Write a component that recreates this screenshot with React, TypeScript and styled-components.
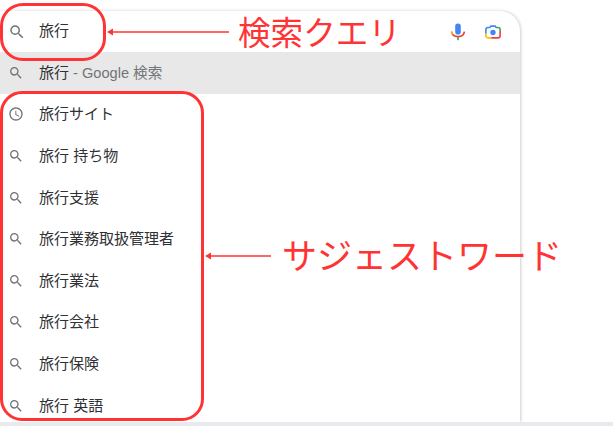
import styled, { createGlobalStyle } from "styled-components";

const GlobalStyle = createGlobalStyle`
    html, body {
        margin: 0;
        padding: 0;
        background: #fff;
        overflow: hidden;
    }
`;

const Page = styled.div`
    position: relative;
    width: 613px;
    height: 426px;
    display: flex;
    flex-direction: column;
    overflow: hidden;
    font-family: "Liberation Sans", "Noto Sans CJK JP", sans-serif;
`;

const Card = styled.div`
    flex: 1;
    min-height: 0;
    width: 520px;
    margin-top: 11px;
    background: #fff;
    border-top-right-radius: 20px;
    box-shadow: 1px 0 3px rgba(32, 33, 36, 0.22);
    overflow: hidden;
`;

const BottomStrip = styled.div`
    height: 4px;
    background: #e8eaed;
    flex-shrink: 0;
    position: relative;
`;

const SearchBar = styled.div`
    height: 41px;
    display: flex;
    align-items: center;
`;

const IconCell = styled.div`
    width: 39px;
    padding-left: 8px;
    box-sizing: border-box;
    display: flex;
    align-items: center;
    color: #70757a;
    flex-shrink: 0;
`;

const Query = styled.div`
    flex: 1;
    font-size: 15px;
    color: #303134;
    padding-bottom: 4px;
`;

const Tools = styled.div`
    display: flex;
    align-items: center;
    gap: 19px;
    padding-right: 19px;
`;

const Row = styled.div<{ $active?: boolean }>`
    height: 41.6px;
    display: flex;
    align-items: center;
    font-size: 15px;
    color: #303134;
    background: ${(props) => (props.$active ? "#e8e8e8" : "transparent")};
`;

const RowText = styled.span`
    padding-bottom: 3px;
`;

const Muted = styled.span`
    color: #70757a;
    font-size: 14.6px;
`;

const RedBox = styled.div<{ $w: number; $h: number; $x: number; $y: number; $radius: number }>`
    position: absolute;
    left: ${(props) => props.$x}px;
    top: ${(props) => props.$y}px;
    width: ${(props) => props.$w}px;
    height: ${(props) => props.$h}px;
    box-sizing: border-box;
    border: 3.5px solid #ff3333;
    border-radius: ${(props) => props.$radius}px;
`;

const Label = styled.div<{ $x: number; $y: number; $size: number }>`
    position: absolute;
    left: ${(props) => props.$x}px;
    top: ${(props) => props.$y}px;
    font-size: ${(props) => props.$size}px;
    font-weight: 400;
    line-height: 40px;
    color: #ff3333;
    white-space: nowrap;
    font-family: "Noto Sans CJK JP", sans-serif;
`;

const ArrowSvg = styled.svg<{ $x: number; $y: number }>`
    position: absolute;
    left: ${(props) => props.$x}px;
    top: ${(props) => props.$y}px;
`;

const SearchIcon = ({ size = 16 }: { size?: number }) => (
    <svg width={size} height={size} viewBox="0 0 24 24" fill="currentColor">
        <path d="M15.5 14h-.79l-.28-.27A6.47 6.47 0 0 0 16 9.5 6.5 6.5 0 1 0 9.5 16c1.61 0 3.09-.59 4.23-1.57l.27.28v.79l5 4.99L20.49 19l-4.99-5zm-6 0C7.01 14 5 11.99 5 9.5S7.01 5 9.5 5 14 7.01 14 9.5 11.99 14 9.5 14z" />
    </svg>
);

const ClockIcon = () => (
    <svg width="16" height="16" viewBox="0 0 24 24" fill="currentColor">
        <path d="M11.99 2C6.47 2 2 6.48 2 12s4.47 10 9.99 10C17.52 22 22 17.52 22 12S17.52 2 11.99 2zM12 20c-4.42 0-8-3.58-8-8s3.58-8 8-8 8 3.58 8 8-3.58 8-8 8zm.5-13H11v6l5.25 3.15.75-1.23-4.5-2.67z" />
    </svg>
);

const MicIcon = () => (
    <svg width="16" height="18" viewBox="0 0 16 18" fill="none">
        <rect x="5.2" y="0.5" width="5.6" height="11" rx="2.8" fill="#4285f4" />
        <path d="M1.6 8.6c.3 3 2.9 5 6.4 5s6.1-2 6.4-5" stroke="#ea4335" strokeWidth="1.6" />
        <path d="M1.6 8.6c.1 1 .5 1.9 1.1 2.6" stroke="#fbbc04" strokeWidth="1.6" />
        <rect x="7.2" y="13.8" width="1.6" height="3.4" fill="#34a853" />
    </svg>
);

const CameraIcon = () => (
    <svg width="16" height="16" viewBox="0 0 18 16" fill="none">
        <path d="M1 10V5.5C1 4.1 2 3 3.4 3h2.2l1-1.6h4.8l1 1.6" stroke="#4285f4" strokeWidth="1.8" />
        <path d="M12.4 3h2.2C16 3 17 4.1 17 5.5V7" stroke="#34a853" strokeWidth="1.8" />
        <path d="M17 7v5.2c0 1.4-1 2.4-2.4 2.4H7" stroke="#ea4335" strokeWidth="1.8" />
        <path d="M7 14.6H3.4C2 14.6 1 13.6 1 12.2V10" stroke="#fbbc04" strokeWidth="1.8" />
        <circle cx="9" cy="8.6" r="3" fill="#4285f4" />
    </svg>
);

const suggestions = [
    { text: "旅行サイト", history: true },
    { text: "旅行 持ち物" },
    { text: "旅行支援" },
    { text: "旅行業務取扱管理者" },
    { text: "旅行業法" },
    { text: "旅行会社" },
    { text: "旅行保険" },
    { text: "旅行 英語" },
];

export default function App() {
    return (
        <Page>
            <GlobalStyle />
            <Card>
                <SearchBar>
                    <IconCell>
                        <SearchIcon size={18} />
                    </IconCell>
                    <Query>旅行</Query>
                    <Tools>
                        <MicIcon />
                        <CameraIcon />
                    </Tools>
                </SearchBar>
                <Row $active>
                    <IconCell>
                        <SearchIcon />
                    </IconCell>
                    <RowText>
                        旅行<Muted> - Google 検索</Muted>
                    </RowText>
                </Row>
                {suggestions.map((item) => (
                    <Row key={item.text}>
                        <IconCell>
                            {item.history ? <ClockIcon /> : <SearchIcon />}
                        </IconCell>
                        <RowText>{item.text}</RowText>
                    </Row>
                ))}
            </Card>
            <BottomStrip />

            <RedBox $x={0} $y={3} $w={106} $h={58} $radius={23} />
            <RedBox $x={0} $y={91} $w={204} $h={330} $radius={22} />

            <ArrowSvg $x={106} $y={26} width="124" height="12" viewBox="0 0 124 12">
                <path d="M1 6l6-3.5v7z" fill="#ff3333" />
                <path d="M6 6h117" stroke="#ff3333" strokeWidth="1.6" />
            </ArrowSvg>
            <Label $x={238} $y={11} $size={32.6}>
                検索クエリ
            </Label>

            <ArrowSvg $x={204} $y={250} width="68" height="12" viewBox="0 0 68 12">
                <path d="M1 6l6-3.5v7z" fill="#ff3333" />
                <path d="M6 6h61" stroke="#ff3333" strokeWidth="1.6" />
            </ArrowSvg>
            <Label $x={282} $y={234} $size={35}>
                サジェストワード
            </Label>
        </Page>
    );
}
